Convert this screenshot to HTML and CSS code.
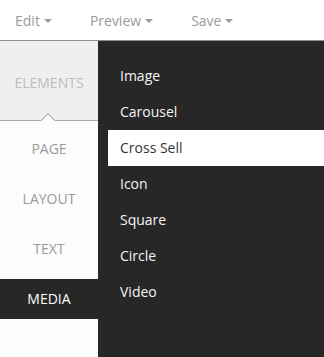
FILE: index.html
```html
<!DOCTYPE html>
<html lang="en">
<head>
  <meta charset="UTF-8">
  <title>Editor</title>
  <link rel="stylesheet" href="styles.css">
</head>
<body>
  <div class="topbar">
    <span class="menu">Edit <i class="caret"></i></span>
    <span class="menu">Preview <i class="caret"></i></span>
    <span class="menu">Save <i class="caret"></i></span>
  </div>

  <div class="main">
    <div class="sidebar">
      <div class="heading">ELEMENTS</div>
      <div class="tabs">
        <div class="tab">PAGE</div>
        <div class="tab">LAYOUT</div>
        <div class="tab">TEXT</div>
        <div class="tab active">MEDIA</div>
      </div>
    </div>

    <div class="panel">
      <div class="item">Image</div>
      <div class="item">Carousel</div>
      <div class="item selected">Cross Sell</div>
      <div class="item">Icon</div>
      <div class="item">Square</div>
      <div class="item">Circle</div>
      <div class="item">Video</div>
    </div>
  </div>
</body>
</html>
```

FILE: styles.css
```css
html, body {
  margin: 0;
  padding: 0;
  height: 100%;
  font-family: "Open Sans", sans-serif;
  font-size: 14px;
  background: #fff;
  overflow: hidden;
}

/* ─────────── top menu ─────────── */
.topbar {
  height: 40px;
  border-bottom: 1px solid #8e8e8e;
  display: flex;
  align-items: center;
  gap: 38px;
  padding-left: 15px;
  color: #9a9a9a;
}
.menu {
  display: flex;
  align-items: center;
  gap: 4px;
}
.caret {
  width: 0;
  height: 0;
  border-left: 4px solid transparent;
  border-right: 4px solid transparent;
  border-top: 4px solid #9a9a9a;
  margin-top: 2px;
}

.main {
  display: flex;
  height: 316px;
}

/* ─────────── left tabs ─────────── */
.sidebar {
  width: 98px;
  background: #fcfcfc;
}
.heading {
  position: relative;
  height: 79px;
  background: #efefef;
  border-bottom: 1px solid #a8a8a8;
  color: #bdbdbd;
  text-align: center;
  line-height: 84px;
}
/* little notch under ELEMENTS */
.heading::after {
  content: "";
  position: absolute;
  left: 43px;
  bottom: -5px;
  width: 9px;
  height: 9px;
  background: #fcfcfc;
  border-top: 1px solid #a8a8a8;
  border-left: 1px solid #a8a8a8;
  transform: rotate(45deg);
}
.tabs {
  display: flex;
  flex-direction: column;
  gap: 10px;
  padding-top: 8px;
}
.tab {
  height: 40px;
  line-height: 40px;
  text-align: center;
  color: #9b9b9b;
}
.tab.active {
  background: #272727;
  color: #fff;
}

/* ─────────── right panel ─────────── */
.panel {
  flex: 1;
  background: #272727;
  padding-top: 17px;
}
.item {
  height: 36px;
  line-height: 36px;
  padding-left: 22px;
  color: #f4f4f4;
}
.item.selected {
  margin-left: 10px;
  padding-left: 12px;
  background: #fff;
  color: #333;
}
```
